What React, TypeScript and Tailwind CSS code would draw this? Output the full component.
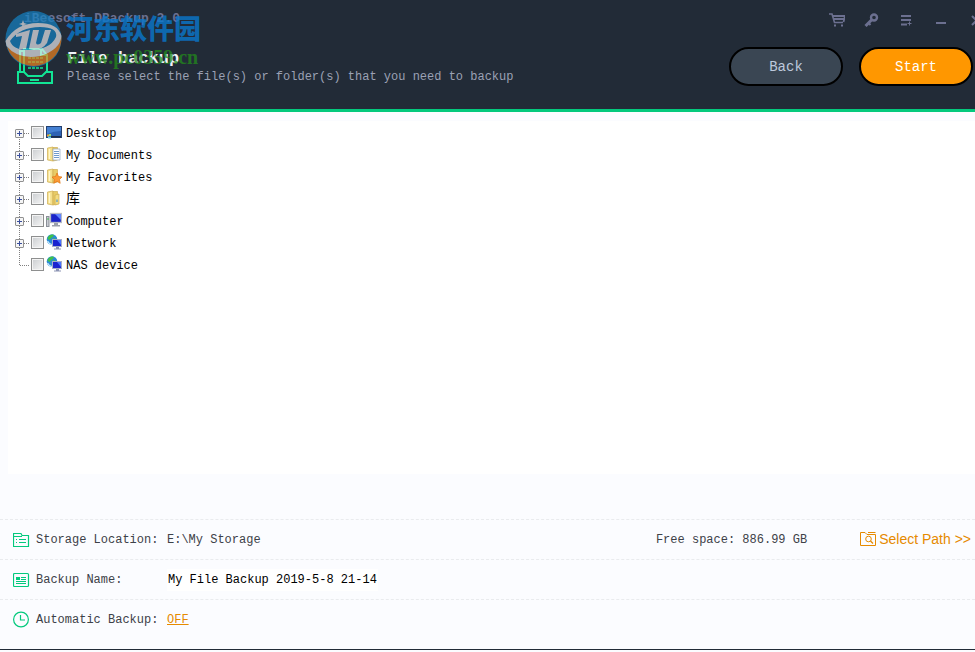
import type { ReactNode } from "react";

const mono = "font-['Liberation_Mono','Noto_Sans_CJK_SC',monospace]";

function FolderShape() {
  return (
    <>
      <path d="M1.500 2 L7 1 V15 L1.500 14 Z" fill="#f5e08c" stroke="#cfae50" strokeWidth=".7" />
      <path d="M7 1.500 H11.500 V14 L7 15 Z" fill="#e8cb66" stroke="#cfae50" strokeWidth=".7" />
      <path d="M3.500 3 V13" stroke="#fff6c8" strokeWidth="1.400" />
    </>
  );
}

function GlobeShape() {
  return (
    <>
      <circle cx="6" cy="5.500" r="5.300" fill="#2b8ad6" />
      <path d="M2 3 Q4 0 8 .7 L7 3 L5 4 L4 6 L1.500 5 Z M6 5 L9 4 L10 7 L6 9 Z" fill="#3fc14a" />
      <path d="M1.500 7 Q3 10 6 10.500" stroke="#c8ecff" strokeWidth="1.200" fill="none" />
      <rect x="6.500" y="5.500" width="9" height="7" fill="#1a24d0" stroke="#a4adc8" />
      <path d="M11 6 H15 V11 Z" fill="#4a74ff" />
      <path d="M10 13 H13 V14.500 H15 V15.500 H8 V14.500 H10 Z" fill="#8b93b3" />
    </>
  );
}

const icons: Record<string, ReactNode> = {
  desktop: (
    <>
      <rect x=".5" y="2.500" width="15" height="11" fill="#2d62b4" stroke="#23406f" />
      <path d="M1 3 H15 V7 Q8 7 1 10 Z" fill="#4480d2" />
      <rect x="3" y="12" width="12" height="1.500" fill="#1c2c48" />
      <rect x="1" y="10.500" width="2" height="2" fill="#f0a030" />
      <rect x="3" y="10" width="2" height="2" fill="#8fe070" />
      <rect x="2" y="12.500" width="3" height="2" fill="#6fd0f0" />
    </>
  ),
  documents: (
    <>
      <FolderShape />
      <path d="M7 3 H14 V14 H7 Z" fill="#fff" stroke="#9db0c8" strokeWidth=".8" />
      <path d="M8 5.500 H13 M8 7.500 H13 M8 9.500 H13 M8 11.500 H13" stroke="#5f8fc6" strokeWidth=".9" />
    </>
  ),
  favorites: (
    <>
      <FolderShape />
      <path d="M11 5 L12.500 8.500 L16 9 L13.500 11.500 L14.200 15.300 L11 13.400 L7.800 15.300 L8.500 11.500 L6 9 L9.500 8.500 Z" fill="#fb9a35" stroke="#e07614" strokeWidth=".7" />
    </>
  ),
  library: (
    <>
      <FolderShape />
      <path d="M9 5 L13 4 V14 L9 15 Z" fill="#f3dc82" stroke="#cfae50" strokeWidth=".7" />
      <path d="M11 9.500 V12" stroke="#4f9bd8" strokeWidth="1.200" />
    </>
  ),
  computer: (
    <>
      <rect x=".5" y="4.500" width="2.500" height="10" fill="#c9ccd2" stroke="#8b8f98" />
      <path d="M1 7 H3" stroke="#3fc14a" />
      <rect x="4.500" y="1.500" width="11" height="9" fill="#1a24c8" stroke="#b6bac6" strokeWidth="1.300" />
      <path d="M9 2 H15 V8 Z" fill="#5f84ff" />
      <path d="M8 11 H12 V13 H8 Z M6 13 H14 V14.500 H6 Z" fill="#9ba0ab" />
    </>
  ),
  network: <GlobeShape />,
};

const nodes = [
  { label: "Desktop", icon: "desktop", expandable: true },
  { label: "My Documents", icon: "documents", expandable: true },
  { label: "My Favorites", icon: "favorites", expandable: true },
  { label: "库", icon: "library", expandable: true },
  { label: "Computer", icon: "computer", expandable: true },
  { label: "Network", icon: "network", expandable: true },
  { label: "NAS device", icon: "network", expandable: false },
];

function TreeRow({ label, icon, expandable, first }: { label: string; icon: string; expandable: boolean; first: boolean }) {
  return (
    <li className="flex h-[22px] items-center">
      <span className="relative h-[22px] w-[22px]">
        <svg className="block" width="22" height="22" fill="none" stroke="#808080" strokeDasharray="1 1" aria-hidden="true">
          <path d={`M11.500 ${first ? 11 : 0} V${expandable ? 22 : 11} M12 11.500 H22`} />
        </svg>
        {expandable && (
          <button type="button" aria-label={`Expand ${label}`} className="absolute top-[7px] left-[7px] size-[9px] rounded-[1px] border border-[#919191] bg-[#f5f5f5]">
            <svg className="block" width="7" height="7" stroke="#3b4f9c" aria-hidden="true">
              <path d="M1 3.500 H6 M3.500 1 V6" />
            </svg>
          </button>
        )}
      </span>
      <label className="flex h-[22px] items-center">
        <input type="checkbox" className="mr-0.5 mb-0.5 ml-px size-[13px] appearance-none border border-[#8e8f8f] bg-linear-to-br from-[#cacdd0] to-[#f6f6f6] ring-1 ring-[#f4f4f4] ring-inset" />
        <svg className="mr-1 mb-0.5" width="16" height="16" aria-hidden="true">{icons[icon]}</svg>
        <span className="pt-px text-[12px] whitespace-nowrap">
          {label === "库" ? <span className="text-[14px]">{label}</span> : label}
        </span>
      </label>
    </li>
  );
}

function ToolButton({ label, children }: { label: string; children: ReactNode }) {
  return (
    <button type="button" aria-label={label} className="flex h-5 w-[35px] shrink-0 items-center justify-center">
      <svg width="16" height="14" fill="none" stroke="#6c7090" aria-hidden="true">{children}</svg>
    </button>
  );
}

function Watermark() {
  return (
    <div className="pointer-events-none absolute top-2.5 left-1 flex gap-0.5">
      <svg width="60" height="60" viewBox="0 0 60 60" className="opacity-70" aria-hidden="true">
        <circle cx="29.500" cy="29" r="28" fill="#1483c4" />
        <path d="M3 37 Q20 48 38 42 Q52 37 57.500 27 A28 28 0 0 1 3 37 Z" fill="#ef8420" />
        <path d="M1.500 31 Q12 13 34 13 Q54 13 57.500 26 Q56 40 36 46 Q14 50 2.500 36 Z M6 31 Q9 40 24 40 Q46 40 52 27 Q54 17 36 17 Q16 17 6 31 Z" fill="#e8e9ee" fillRule="evenodd" />
        <path d="M12 24 L26 20 L22 39 L15 39 L18 26 L12 27 Z M29 20 L35 20 L32 33 Q33 36 37 33 L41 20 L47 20 L43 33 Q38 40 30 40 L25 39 Z" fill="#e8e9ee" />
        <path d="M19 10 L20 13 L23 14 L20 15 L19 18 L18 15 L15 14 L18 13 Z" fill="#e8e9ee" />
      </svg>
      <div className="whitespace-nowrap">
        <div className="h-[37px] font-['Noto_Sans_CJK_SC',sans-serif] text-[27px] leading-9 font-black text-[#0a78cc] opacity-80">河东软件园</div>
        <div className="font-['Liberation_Serif',serif] text-[20px] leading-5 font-bold text-[#238a1c] opacity-75">www.pc0359.cn</div>
      </div>
    </div>
  );
}

const rowClass = "flex h-10 items-center border-t border-dashed border-[#e9ebee] pl-[13px]";

export default function App() {
  return (
    <div className={`${mono} flex min-h-screen flex-col overflow-hidden bg-[#fbfcff] text-[12px] leading-4 text-[#3d4148]`}>
      <header className="relative flex h-28 shrink-0 flex-col overflow-hidden border-b-3 border-[#04c97d] bg-[#222b37]">
        <div className="flex h-10 items-center justify-between pl-6">
          <span className="mb-0.5 text-[13px] font-bold text-[#6c7090]">iBeesoft DBackup 2.0</span>
          <nav aria-label="Window" className="-mr-[19px] flex">
            <ToolButton label="Buy">
              <path d="M0 1 H3 L5.500 9.500 H14" strokeWidth="1.600" />
              <path d="M3.500 3 H16 L14.500 9 M4 6 H15" strokeWidth="1.800" />
              <path d="M5 12.500 H7 M12 12.500 H14" strokeWidth="2" />
            </ToolButton>
            <ToolButton label="Register">
              <circle cx="10" cy="4.500" r="3" strokeWidth="2.400" />
              <path d="M8 6.500 L1.500 13" strokeWidth="3" />
              <path d="M4 9.500 L6.500 12" strokeWidth="2" />
            </ToolButton>
            <ToolButton label="Menu">
              <path d="M2 3 H12 M2 7 H12 M2 11.500 H8" strokeWidth="2" />
              <path d="M8.500 10.500 H12.500 M10.500 8.500 V12.500" />
            </ToolButton>
            <ToolButton label="Minimize"><path d="M2 10 H12" strokeWidth="2" /></ToolButton>
            <ToolButton label="Close"><path d="M3 3 L12 12 M12 3 L3 12" strokeWidth="2" /></ToolButton>
          </nav>
        </div>
        <div className="flex items-start pt-[7px] pr-0.5 pl-4">
          <svg className="mr-3.5 shrink-0" width="37" height="38" fill="none" stroke="#12e595" strokeWidth="2" aria-hidden="true">
            <path d="M8 25 V2 H26 L31 8 V25 M25 2 V8 H31 M4 25 V4 H8" />
            <path d="M2 25 H8 L12 29 H26 L30 25 H36 V36 H2 Z M14 33 H23" />
            <path d="M12 11 H28 M12 15 H28 M12 21 H28" strokeDasharray="3 1" strokeWidth="1.300" />
          </svg>
          <div className="flex-1 pt-0.5 whitespace-nowrap">
            <h1 className="text-[17px] leading-5 font-bold text-[#f0f3fa]">File backup</h1>
            <p className="text-[#9ba1b4]">Please select the file(s) or folder(s) that you need to backup</p>
          </div>
          <div className="flex gap-4 text-[14px]">
            <button type="button" className="h-[39px] w-[114px] rounded-full border-2 border-black bg-[#3a4653] text-[#bdc9dc]">Back</button>
            <button type="button" className="h-[39px] w-[114px] rounded-full border-2 border-black bg-[#ff9700] text-white">Start</button>
          </div>
        </div>
        <Watermark />
      </header>

      <main className="mt-[9px] mb-[45px] ml-2 flex-1 bg-white pt-px text-black">
        <ul>
          {nodes.map((n, i) => <TreeRow key={n.label} {...n} first={i === 0} />)}
        </ul>
      </main>

      <footer className="mb-0.5 border-b border-[#222b37] pb-2.5">
        <div className={rowClass}>
          <svg className="mr-1.5" width="17" height="16" fill="none" stroke="#04c97d" aria-hidden="true">
            <path d="M.5 14.500 V1.500 H8 L9 3.500 H15.500 V14.500 Z M1 4.500 H9" strokeWidth="1.200" />
            <path d="M3 7.500 H4 M6 7.500 H13 M3 10.500 H4 M6 10.500 H13" />
          </svg>
          <span className="w-[131px]">Storage Location:</span>
          <span className="flex-1">E:\My Storage</span>
          <span className="mr-[53px]">Free space: 886.99 GB</span>
          <button type="button" className="mr-1 mb-0.5 flex items-center gap-[3px] font-['Liberation_Sans',Arial,sans-serif] text-[14px] text-[#e68a00]">
            <svg width="16" height="16" fill="none" stroke="#e68a00" aria-hidden="true">
              <path d="M.5 14.500 V1.500 H5 L7 3.500 H15.500 V14.500 Z M8 1.500 H15.500" />
              <circle cx="8.500" cy="8" r="2.800" />
              <path d="M10.500 10 L13 12.500" strokeWidth="1.300" />
            </svg>
            Select Path &gt;&gt;
          </button>
        </div>
        <div className={rowClass}>
          <svg className="mr-1.5" width="17" height="16" fill="none" stroke="#04c97d" aria-hidden="true">
            <rect x=".5" y="1.500" width="15" height="13" rx="1" strokeWidth="1.200" />
            <path d="M3 6.500 H7" strokeWidth="3" />
            <path d="M8 5.500 H13 M8 7.500 H13 M3 9.500 H13 M3 11.500 H13" />
          </svg>
          <label htmlFor="backup-name" className="w-[131px]">Backup Name:</label>
          <input id="backup-name" defaultValue="My File Backup 2019-5-8 21-14" className="h-[22px] w-[211px] bg-white pl-px text-black outline-none" />
        </div>
        <div className={rowClass}>
          <svg className="mr-1.5" width="17" height="17" fill="none" stroke="#04c97d" aria-hidden="true">
            <circle cx="8" cy="8.500" r="7.400" strokeWidth="1.200" />
            <path d="M7.500 4 V9 H12" strokeWidth="1.200" />
          </svg>
          <span className="w-[131px]">Automatic Backup:</span>
          <button type="button" className="text-[#e68a00] underline">OFF</button>
        </div>
      </footer>
    </div>
  );
}
